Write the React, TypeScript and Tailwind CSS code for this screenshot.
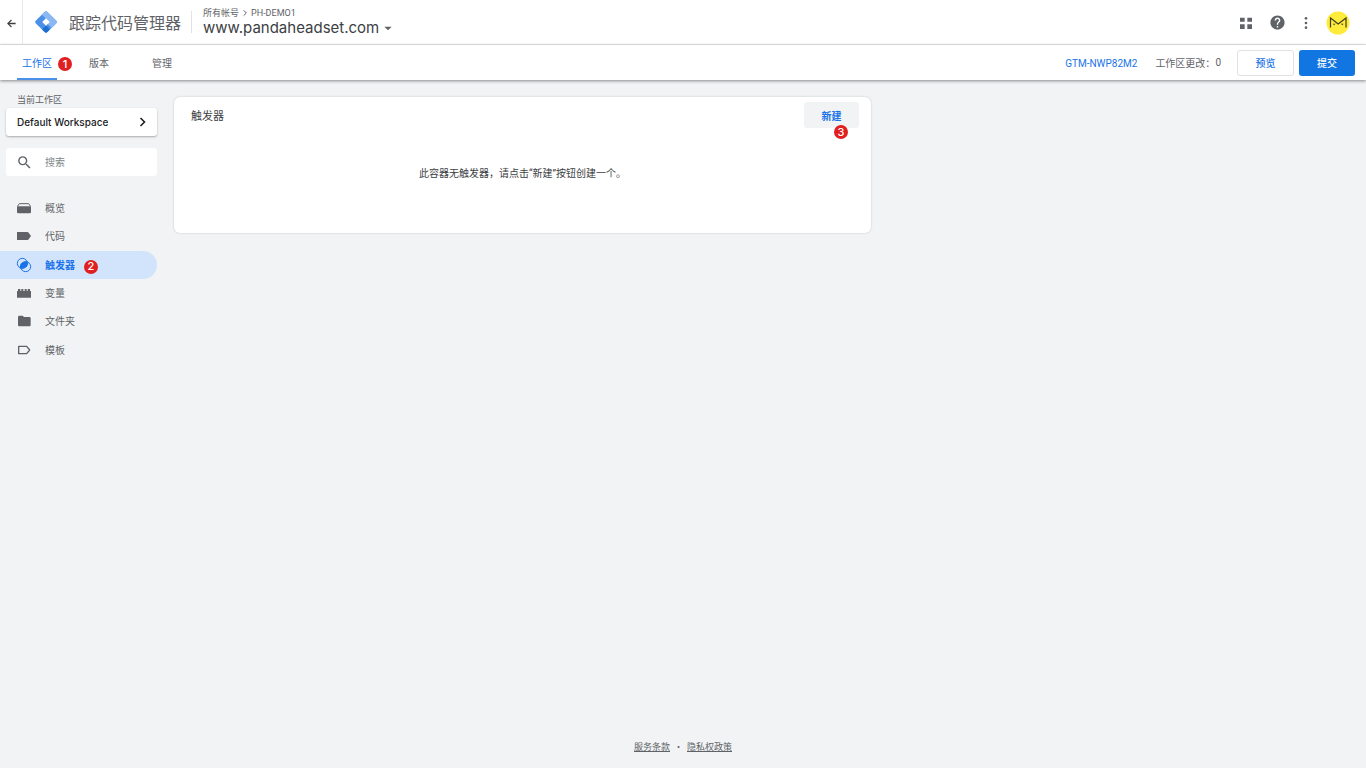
import type { ReactNode } from "react";
import clsx from "clsx";

function StepBadge({ n, className }: { n: number; className: string }) {
  return (
    <span
      className={clsx(
        "absolute flex size-3.5 items-center justify-center rounded-full bg-[#e02020] font-['Inter',sans-serif] text-[11px] leading-none font-medium text-white",
        className,
      )}
    >
      {n}
    </span>
  );
}

function Icon({ children, className = "size-4" }: { children: ReactNode; className?: string }) {
  return (
    <svg viewBox="0 0 24 24" fill="currentColor" className={clsx("shrink-0", className)} aria-hidden="true">
      {children}
    </svg>
  );
}

function Logo() {
  return (
    <svg viewBox="0 0 22 22" className="size-[22px] shrink-0" aria-hidden="true">
      <path d="M9.6.9a2 2 0 0 1 2.800 0l8.700 8.700a2 2 0 0 1 0 2.800l-8.700 8.700a2 2 0 0 1-2.800 0L.9 12.400a2 2 0 0 1 0-2.800z" fill="#4a90e8" />
      <path d="M6.800 3.700 9.600.9a2 2 0 0 1 2.800 0l8.700 8.700a2 2 0 0 1 0 2.800l-4.500 4.500L11 11.300l3.600-.3z" fill="#8ab8f3" />
      <path d="m11 14.600 3.900 4-2.500 2.500a2 2 0 0 1-2.800 0l-2.500-2.500z" fill="#1b6fd0" />
      <path d="m11 7.200 3.800 3.800-3.800 3.800L7.200 11z" fill="#fff" />
    </svg>
  );
}

function Avatar() {
  return (
    <svg viewBox="0 0 24 24" className="size-6" aria-hidden="true">
      <circle cx="12" cy="12" r="11.5" fill="#ffeb3b" />
      <path d="M4.500 16.500V7l7.700 6L20 7v9.500" fill="none" stroke="#3c3d22" strokeWidth="1.200" />
      <path d="M6.800 12.800h2.600l-1.300 1.400zM15 12.800h2.600l-1.300 1.400z" fill="#3c3d22" />
    </svg>
  );
}

function Header() {
  return (
    <header className="flex h-[45px] border-b border-[#e4e6e8] bg-white">
      <button aria-label="返回" className="flex w-[23px] items-center justify-center border-r border-[#e8eaed] pt-0.5 text-[#3c4043]">
        <Icon className="size-[11px]">
          <path d="M21 10.600H7.500l5.400-5.400L11 3.300 2.300 12l8.700 8.700 1.900-1.900-5.400-5.400H21z" />
        </Icon>
      </button>
      <div className="flex items-center pl-3">
        <Logo />
        <h1 className="ml-3 text-[16px] leading-6 text-[#5f6368]">跟踪代码管理器</h1>
        <div className="ml-2.5 h-[22px] w-px bg-[#e0e2e5]" />
      </div>
      <div className="flex flex-col pt-[7px] pl-[11px]">
        <div className="flex items-center gap-0.5 text-[9px] leading-3 text-[#5f6368]">
          <a href="#accounts">所有帐号</a>
          <Icon className="size-2">
            <path d="m8 4 8 8-8 8" fill="none" stroke="currentColor" strokeWidth="3" />
          </Icon>
          <a href="#account" className="font-['Roboto',sans-serif]">PH-DEMO1</a>
        </div>
        <button className="flex items-center gap-[5px] font-['Inter',sans-serif] text-[15px] leading-[18px] text-[#3c4043]">
          www.pandaheadset.com
          <Icon className="size-2 text-[#5f6368]">
            <path d="M1 8h22L12 19z" />
          </Icon>
        </button>
      </div>
      <div className="ml-auto flex items-center pt-px pr-4 text-[#5f6368]">
        <button aria-label="应用">
          <Icon>
            <path d="M3 4h7v6H3zM14 4h7v6h-7zM3 14h7v7H3zM14 14h7v7h-7z" />
          </Icon>
        </button>
        <button aria-label="帮助" className="ml-[15px]">
          <Icon className="size-[17px]">
            <path d="M12 2C6.480 2 2 6.480 2 12s4.480 10 10 10 10-4.480 10-10S17.520 2 12 2zm1 17h-2v-2h2v2zm2.070-7.750-.9.920C13.450 12.900 13 13.500 13 15h-2v-.5c0-1.100.45-2.100 1.170-2.830l1.240-1.260c.37-.36.59-.86.59-1.410 0-1.100-.9-2-2-2s-2 .9-2 2H8c0-2.210 1.790-4 4-4s4 1.790 4 4c0 .88-.36 1.680-.93 2.250z" />
          </Icon>
        </button>
        <button aria-label="更多" className="ml-3">
          <Icon>
            <circle cx="12" cy="5" r="2" />
            <circle cx="12" cy="12" r="2" />
            <circle cx="12" cy="19" r="2" />
          </Icon>
        </button>
        <button aria-label="帐号" className="ml-3">
          <Avatar />
        </button>
      </div>
    </header>
  );
}

function TabBar() {
  return (
    <div className="relative flex h-[35px] items-center bg-white pr-[11px] text-[10px] text-[#5f6368] shadow-[0_1px_3px_rgba(60,64,67,0.6)]">
      <nav className="flex h-full leading-[35px]">
        <a href="#workspace" className="relative ml-[17px] w-10 border-b-2 border-[#4a90e8] text-center text-[#1a73e8]">
          工作区
          <StepBadge n={1} className="top-3 left-[41px]" />
        </a>
        <a href="#versions" className="ml-8">版本</a>
        <a href="#admin" className="ml-[43px]">管理</a>
      </nav>
      <div className="ml-auto flex items-center">
        <a href="#container" className="pt-px font-['Roboto',sans-serif] text-[10px] text-[#1a73e8]">GTM-NWP82M2</a>
        <span className="ml-[18px]">工作区更改：</span>
        <span className="font-['Roboto',sans-serif]">0</span>
        <button className="ml-4 h-[26px] w-[57px] rounded-[3px] border border-[#dfe1e5] font-medium text-[#1a73e8]">预览</button>
        <button className="ml-[5px] h-[26px] w-14 rounded-[3px] bg-[#1276e2] font-medium text-white">提交</button>
      </div>
    </div>
  );
}

const navItems = [
  {
    label: "概览",
    icon: (
      <>
        <path d="M1.500 9.500h21V18a2 2 0 0 1-2 2h-17a2 2 0 0 1-2-2z" />
        <path d="M2.500 9 5 5.500h14L21.500 9" fill="none" stroke="currentColor" strokeWidth="1.500" />
      </>
    ),
  },
  { label: "代码", icon: <path d="M1.500 6H17c.7 0 1.300.3 1.700.9L22.500 12l-3.800 5.100c-.4.6-1 .9-1.700.9H1.500z" /> },
  {
    label: "触发器",
    icon: (
      <>
        <circle cx="9.500" cy="9.500" r="7.500" fill="none" stroke="currentColor" strokeWidth="1.500" />
        <circle cx="14.500" cy="14.500" r="7.500" fill="none" stroke="currentColor" strokeWidth="1.500" />
        <path d="M16.500 7.500C18 12 16 16 7.500 16.500 6 12 8 8 16.500 7.500z" stroke="currentColor" strokeWidth="2" />
      </>
    ),
  },
  {
    label: "变量",
    icon: <path d="M1.500 19V9H3V6h3.500v3H8V6h3v3h2V6h3v3h1.500V6H21v3h1.500v10z" />,
  },
  {
    label: "文件夹",
    icon: <path d="M10 4H5c-1.100 0-2 .9-2 2v12c0 1.100.9 2 2 2h15c1.100 0 2-.9 2-2V8c0-1.100-.9-2-2-2h-8z" />,
  },
  {
    label: "模板",
    icon: <path d="M4 6.500h12L20.500 12 16 17.500H4z" fill="none" stroke="currentColor" strokeWidth="2" strokeLinejoin="round" />,
  },
];

function Sidebar() {
  return (
    <aside className="w-[157px] shrink-0 pt-3.5 text-[#5f6368]">
      <p className="pl-[17px] text-[9px] leading-3">当前工作区</p>
      <button className="mt-0.5 ml-[6px] flex h-7 w-[151px] items-center justify-between rounded-[3px] bg-white pr-2 pl-[11px] text-[#202124] shadow-[0_1px_2px_rgba(60,64,67,0.4)]">
        <span className="font-['Inter',sans-serif] text-[10px] font-medium">Default Workspace</span>
        <Icon className="size-3">
          <path d="m7 4 8 8-8 8" fill="none" stroke="currentColor" strokeWidth="3.200" />
        </Icon>
      </button>
      <label className="mt-3 ml-[6px] flex h-7 items-center rounded-[3px] bg-white pl-2.5">
        <Icon className="size-[17px]">
          <path d="M15.500 14h-.79l-.28-.27A6.470 6.470 0 0 0 16 9.500 6.500 6.500 0 1 0 9.500 16c1.610 0 3.090-.59 4.230-1.570l.27.280v.79l5 4.990L20.490 19l-4.990-5zm-6 0C7.010 14 5 11.990 5 9.500S7.010 5 9.500 5 14 7.010 14 9.500 11.990 14 9.500 14z" />
        </Icon>
        <input
          type="search"
          aria-label="搜索"
          placeholder="搜索"
          className="ml-3 min-w-0 flex-1 text-[10px] leading-4 outline-none placeholder:text-[#80868b]"
        />
      </label>
      <nav className="mt-[18px] grid h-[170px] auto-rows-fr text-[10px] leading-4">
        {navItems.map(({ label, icon }) => {
          const active = label === "触发器";
          return (
            <a
              key={label}
              href={"#" + label}
              className={clsx(
                "flex items-center gap-[13px] pl-4",
                active && "rounded-r-full bg-[#d2e4fc] font-bold text-[#1a73e8]",
              )}
            >
              <Icon>{icon}</Icon>
              <span className="relative">
                {label}
                {active && <StepBadge n={2} className="top-[3px] left-[39px]" />}
              </span>
            </a>
          );
        })}
      </nav>
    </aside>
  );
}

function TriggersCard() {
  return (
    <section className="mt-[17px] ml-[17px] w-[697px] self-start rounded-[6px] bg-white pb-[51px] shadow-[0_0_2px_rgba(60,64,67,0.25)]">
      <div className="flex items-start justify-between pt-[5px] pr-3 pl-[17px]">
        <h2 className="text-[11px] leading-[27px] text-[#3c4043]">触发器</h2>
        <button className="relative h-[26px] w-[55px] rounded-[3px] bg-[#f1f3f4] text-[10px] font-bold text-[#1a73e8]">
          新建
          <StepBadge n={3} className="top-[23px] left-[30px]" />
        </button>
      </div>
      <p className="mt-[37px] text-center font-['Roboto','Noto_Sans_CJK_SC',sans-serif] text-[10px] leading-4 text-[#3c4043]">
        此容器无触发器，请点击“新建”按钮创建一个。
      </p>
    </section>
  );
}

export default function App() {
  return (
    <div className="flex min-h-screen flex-col bg-[#f1f3f4] font-['Noto_Sans_CJK_SC',sans-serif]" lang="zh-CN">
      <Header />
      <TabBar />
      <main className="flex flex-1">
        <Sidebar />
        <TriggersCard />
      </main>
      <footer className="flex justify-center gap-1 pb-3.5 text-[9px] leading-[14px] text-[#5f6368]">
        <a href="#terms" className="underline">服务条款</a>
        <span>·</span>
        <a href="#privacy" className="underline">隐私权政策</a>
      </footer>
    </div>
  );
}
